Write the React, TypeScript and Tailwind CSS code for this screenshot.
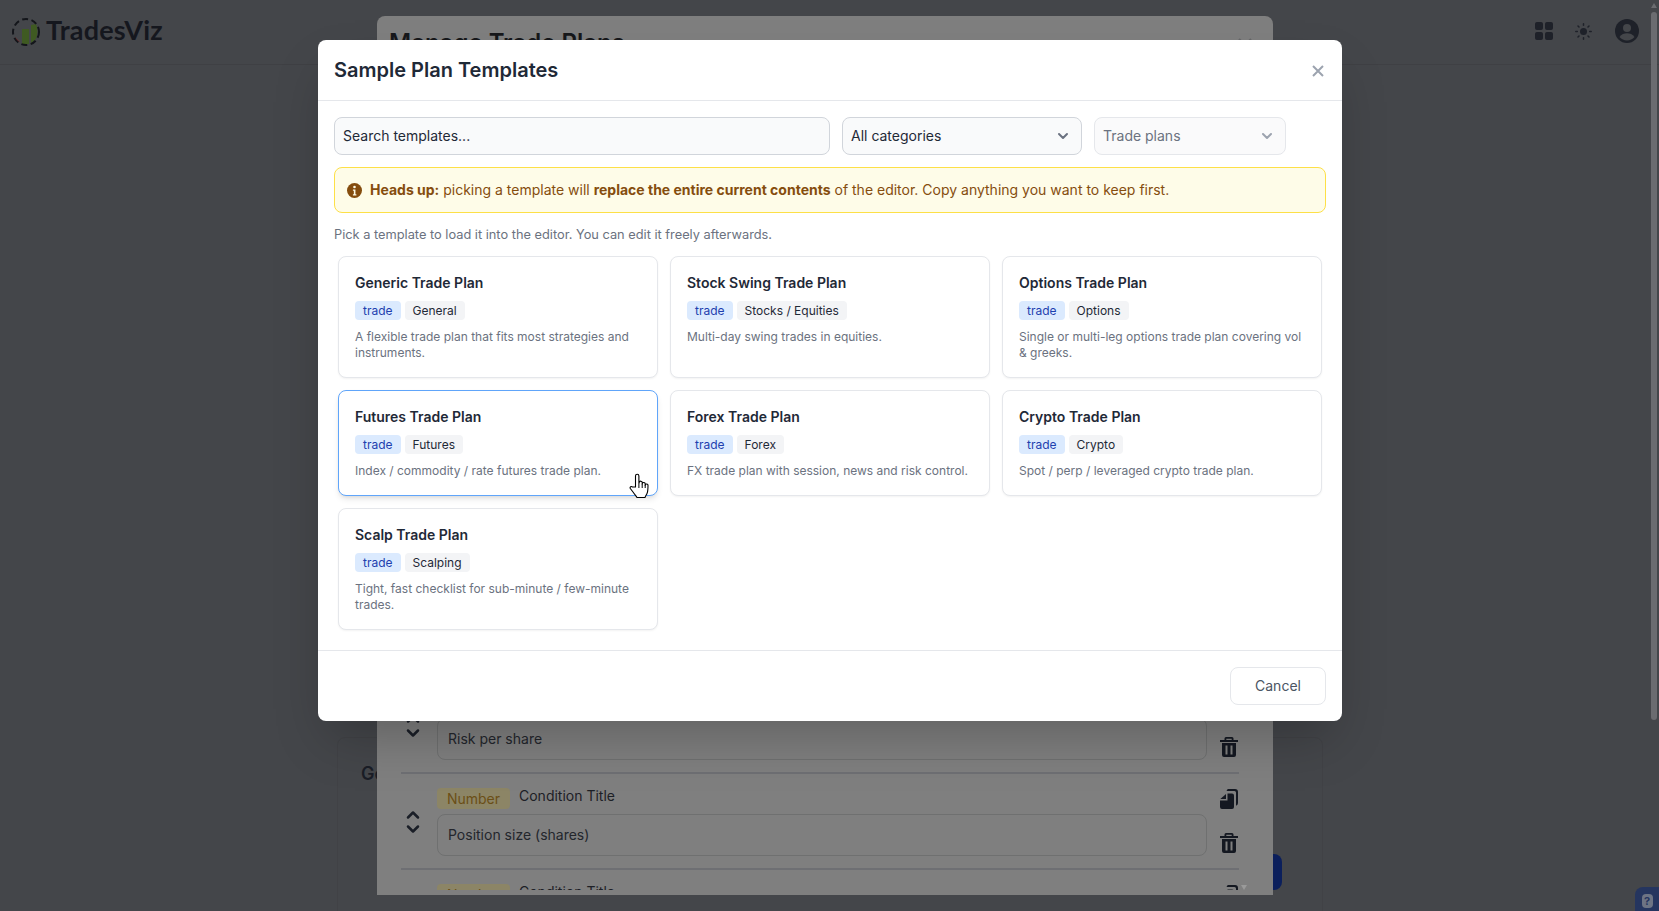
import React from "react";
import { ChevronDown, ChevronUp } from "lucide-react";

const templates = [
  { title: "Generic Trade Plan", tag: "General", desc: "A flexible trade plan that fits most strategies and instruments." },
  { title: "Stock Swing Trade Plan", tag: "Stocks / Equities", desc: "Multi-day swing trades in equities." },
  { title: "Options Trade Plan", tag: "Options", desc: "Single or multi-leg options trade plan covering vol & greeks." },
  { title: "Futures Trade Plan", tag: "Futures", desc: "Index / commodity / rate futures trade plan.", hover: true },
  { title: "Forex Trade Plan", tag: "Forex", desc: "FX trade plan with session, news and risk control." },
  { title: "Crypto Trade Plan", tag: "Crypto", desc: "Spot / perp / leveraged crypto trade plan." },
  { title: "Scalp Trade Plan", tag: "Scalping", desc: "Tight, fast checklist for sub-minute / few-minute trades." },
];

function Logo() {
  return (
    <svg width="30" height="30" viewBox="0 0 30 30">
      <path d="M4 20 L9 25 L4 24 Z" fill="#6d2a2a" />
      <rect x="11" y="12" width="7" height="15" fill="#3f5a22" />
      <path d="M20 8 L25 7 C27 12 27 19 24 23 L20 26 Z" fill="#3f5a22" />
      <circle cx="15" cy="15" r="13" fill="none" stroke="#14161b" strokeWidth="2" strokeDasharray="6 3.5" />
    </svg>
  );
}

function CopyIcon() {
  return (
    <svg width="18" height="20" viewBox="0 0 18 20" fill="#141821">
      <path d="M8 0h7a3 3 0 0 1 3 3v11a3 3 0 0 1-2 2.8V3.500A1.500 1.500 0 0 0 14.500 2H6.600A3 3 0 0 1 8 0Z" />
      <path d="M6 5v5H0.300L6 5Z" />
      <path d="M7.500 4.500H12a2 2 0 0 1 2 2V18a2 2 0 0 1-2 2H2a2 2 0 0 1-2-2v-6.500h7.500V4.500Z" />
    </svg>
  );
}

function TrashIcon() {
  return (
    <svg width="18" height="20" viewBox="0 0 18 20" fill="#141821">
      <path fillRule="evenodd" d="M6 0h6a1.500 1.500 0 0 1 1.500 1.500V3H18v2H0V3h4.500V1.500A1.500 1.500 0 0 1 6 0Zm.300 1.700V3h5.400V1.700H6.300Z" />
      <path fillRule="evenodd" d="M2 6h14v12a2 2 0 0 1-2 2H4a2 2 0 0 1-2-2V6Zm3.500 2.500v9h2v-9h-2Zm5 0v9h2v-9h-2Z" />
    </svg>
  );
}

function ConditionRow({ label }: { label: string }) {
  return (
    <div className="flex items-center border-b-2 border-[#6e6f73] pt-[14px] pb-[12px]">
      <div className="w-[36px] flex flex-col items-start pl-[2px] text-[#1a1e27]">
        <ChevronUp size={20} strokeWidth={3} className="-mb-[6px]" />
        <ChevronDown size={20} strokeWidth={3} />
      </div>
      <div className="w-[770px]">
        <div className="flex items-center gap-[9px] mb-[5px] h-[21px]">
          <span className="h-[21px] w-[73px] rounded bg-[#8c8566] text-[#6b4f16] text-sm leading-[22px] text-center">Number</span>
          <span className="text-sm text-[#1d2026] -mt-[5px]">Condition Title</span>
        </div>
        <div className="h-[42px] rounded-lg border border-[#6f7070] px-[10px] flex items-center text-sm text-[#23262c]">{label}</div>
      </div>
      <div className="ml-[13px] w-[18px] flex flex-col items-center gap-[24px] -mt-[2px]">
        <CopyIcon />
        <TrashIcon />
      </div>
    </div>
  );
}

function TemplateCard({ title, tag, desc, hover }: { title: string; tag: string; desc: string; hover?: boolean }) {
  return (
    <div className={`rounded-lg border bg-white p-4 ${hover ? "border-[#60a5fa] shadow-md" : "border-[#e5e7eb] shadow-xs"}`}>
      <div className="text-sm font-semibold leading-5 text-[#1f2937]">{title}</div>
      <div className="flex gap-[4px] mt-2">
        <span className="h-[19px] px-2 rounded bg-[#dbeafe] text-[#1e40af] text-xs leading-[19px]">trade</span>
        <span className="h-[19px] px-2 rounded bg-[#f3f4f6] text-[#1f2937] text-xs leading-[19px]">{tag}</span>
      </div>
      <p className="mt-[9px] text-xs leading-4 text-[#6b7280]">{desc}</p>
    </div>
  );
}

export default function App() {
  return (
    <div className="relative h-screen w-full overflow-hidden bg-[#44464a] font-['Inter',sans-serif]">
      {/* page behind the overlays */}
      <div className="h-[65px] border-b border-[#3f4044] flex items-center pl-[11px] pr-[20px]">
        <Logo />
        <span className="ml-[5px] -mt-[4px] font-['Lato',sans-serif] font-bold text-[27px] text-[#15171e] tracking-[0.2px]">TradesViz</span>
        <div className="ml-auto flex items-center -mr-[12px] -mt-[2px]">
          <div className="grid grid-cols-2 gap-[2px]">
            <span className="w-[8px] h-[8px] rounded-[2px] bg-[#1e2129]" />
            <span className="w-[8px] h-[8px] rounded-[2px] bg-[#1e2129]" />
            <span className="w-[8px] h-[8px] rounded-[2px] bg-[#1e2129]" />
            <span className="w-[8px] h-[8px] rounded-[2px] bg-[#1e2129]" />
          </div>
          <svg className="ml-[22px]" width="17" height="17" viewBox="0 0 17 17" fill="#1e2129" stroke="#1e2129" strokeWidth="1.500" strokeLinecap="round">
            <circle cx="8.500" cy="8.500" r="3.500" stroke="none" />
            <path d="M8.500 .8v1.500M8.500 14.700v1.500M.8 8.500h1.500M14.700 8.500h1.500M3 3l1 1M13 13l1 1M3 14l1-1M13 4l1-1" />
          </svg>
          <svg className="ml-[23px] mr-[12px]" width="24" height="24" viewBox="0 0 24 24">
            <circle cx="12" cy="12" r="12" fill="#1e2129" />
            <circle cx="12" cy="9" r="4" fill="#44464a" />
            <path d="M4.500 18c2-3 4.500-3.800 7.500-3.800s5.500.8 7.500 3.800c-2 2.300-4.500 3.500-7.500 3.500s-5.500-1.200-7.500-3.500Z" fill="#44464a" />
          </svg>
        </div>
      </div>

      <div className="mt-[672px] ml-[337px] w-[986px] h-[300px] rounded-lg border border-[#414246] pt-[22px] pl-[23px]">
        <span className="text-lg font-semibold text-[#1a1d26]">General</span>
      </div>

      {/* main window scrollbar */}
      <div className="absolute right-[2px] top-[12px] w-[6px] h-[708px] rounded-full bg-[#6b6c70]" />
      <div className="absolute right-[2px] top-[3px] w-0 h-0 border-x-[3px] border-x-transparent border-b-[5px] border-b-[#6b6c70]" />

      {/* help widget */}
      <div className="absolute right-0 top-[887px] w-[24px] h-[30px] rounded-tl-lg bg-[#25355f] flex justify-center pt-[7px]">
        <span className="w-[11px] h-[14px] rounded-sm bg-[#6d7484] text-[#25355f] text-[11px] font-bold leading-[14px] text-center">?</span>
      </div>

      {/* save button peeking behind the plans dialog */}
      <div className="absolute left-[1250px] top-[854px] w-[32px] h-[36px] rounded-lg bg-[#0b1f5c]" />

      {/* Manage Trade Plans dialog, dimmed */}
      <div className="absolute left-[377px] top-[16px] w-[896px] h-[879px] rounded-t-lg bg-[#7f7f7f] pb-[5px]">
        <div className="relative h-full overflow-hidden">
          <div className="px-3 pt-[11px] text-2xl font-semibold text-[#17181b]">Manage Trade Plans</div>
          <svg className="absolute right-[21px] top-[22px]" width="14" height="14" viewBox="0 0 14 14" stroke="#666769" strokeWidth="2">
            <path d="M1 1l12 12M13 1L1 13" />
          </svg>
          <div className="absolute left-[24px] w-[838px] top-[662px]">
            <ConditionRow label="Risk per share" />
            <ConditionRow label="Position size (shares)" />
            <ConditionRow label="" />
          </div>
        </div>
        <div className="absolute right-[26px] top-[869px] w-0 h-0 border-x-[3px] border-x-transparent border-t-[5px] border-t-[#9a9a9a]" />
      </div>

      {/* Sample Plan Templates dialog */}
      <div className="absolute left-[318px] top-[40px] w-[1024px] h-[681px] rounded-lg bg-white shadow-2xl flex flex-col">
        <div className="h-[61px] shrink-0 border-b border-[#e5e7eb] flex items-center justify-between px-4">
          <h2 className="text-xl font-semibold text-[#1f2937]">Sample Plan Templates</h2>
          <svg width="12" height="12" viewBox="0 0 12 12" stroke="#9ca3af" strokeWidth="2" className="mr-[2px] mt-[2px]">
            <path d="M1 1l10 10M11 1L1 11" />
          </svg>
        </div>

        <div className="flex-1 px-4 pt-4">
          <div className="flex gap-3">
            <input
              readOnly
              placeholder="Search templates..."
              className="w-[496px] h-[38px] rounded-lg border border-[#d1d5db] bg-[#f9fafb] px-2 pb-[1px] text-sm placeholder:text-[#1f2937] outline-none"
            />
            <div className="w-[240px] h-[38px] rounded-lg border border-[#d1d5db] bg-[#f9fafb] pl-2 pr-[10px] flex items-center justify-between text-sm text-[#1f2937]">
              All categories
              <ChevronDown size={16} strokeWidth={3} className="text-[#6b7280]" />
            </div>
            <div className="w-[192px] h-[38px] rounded-lg border border-[#e5e7eb] bg-[#fafafb] pl-2 pr-[10px] flex items-center justify-between text-sm text-[#6b7280]">
              Trade plans
              <ChevronDown size={16} strokeWidth={3} className="text-[#9ca3af]" />
            </div>
          </div>

          <div className="mt-3 h-[46px] rounded-lg border border-[#fde047] bg-[#fefce8] px-3 flex items-center gap-2 text-sm text-[#854d0e]">
            <svg width="15" height="15" viewBox="0 0 16 16" className="shrink-0">
              <circle cx="8" cy="8" r="8" fill="#854d0e" />
              <circle cx="8" cy="4.300" r="1.400" fill="#fefce8" />
              <path d="M6.300 7h2.700v5h1v1.300H6.300V12h1V8.300h-1Z" fill="#fefce8" />
            </svg>
            <span>
              <b className="font-bold">Heads up:</b> picking a template will{" "}
              <b className="font-bold">replace the entire current contents</b> of the editor. Copy anything you want to keep first.
            </span>
          </div>

          <p className="mt-[12px] text-[12.800px] leading-5 text-[#6b7280]">Pick a template to load it into the editor. You can edit it freely afterwards.</p>

          <div className="mt-[11px] px-1 grid grid-cols-3 gap-3">
            {templates.map((t) => (
              <TemplateCard key={t.title} {...t} />
            ))}
          </div>
        </div>

        <div className="h-[71px] shrink-0 border-t border-[#e5e7eb] flex items-center justify-end px-4">
          <button className="w-[96px] h-[38px] rounded-lg border border-[#e5e7eb] text-sm text-[#4b5563]">Cancel</button>
        </div>
      </div>

      {/* mouse cursor */}
      <svg className="absolute left-[629px] top-[473px]" width="22" height="26" viewBox="0 0 22 26">
        <path
          d="M6.500 14V3a1.700 1.700 0 0 1 3.400 0v7.500l.3-1a1.500 1.500 0 0 1 3 .4l0 1a1.500 1.500 0 0 1 3 .3v1a1.400 1.400 0 0 1 2.800.3c0 4 0 6-1 8-1 2-2 3.500-2 4h-8c-1-2-2.500-3-4-5.500L1.300 15.500c-.8-1.500 1-2.700 2.200-1.500Z"
          fill="#fff"
          stroke="#000"
          strokeWidth="1.100"
          strokeLinejoin="round"
        />
        <path d="M9.900 11v4M13.200 11v4M16.200 12v3" stroke="#000" strokeWidth="1" fill="none" />
      </svg>
    </div>
  );
}
